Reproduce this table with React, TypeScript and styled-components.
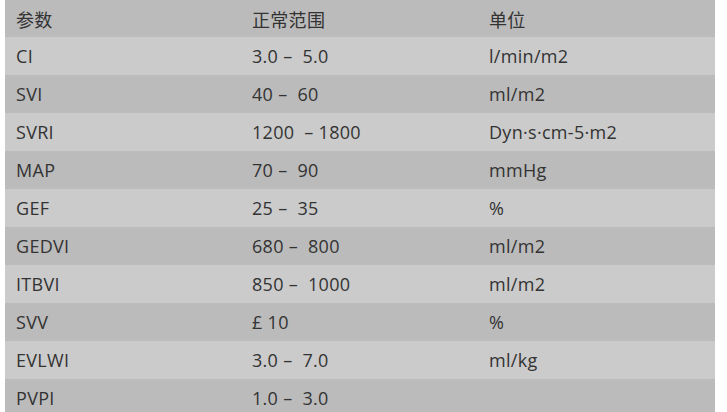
import React from "react";
import styled, { createGlobalStyle } from "styled-components";

const Global = createGlobalStyle`
  html, body { margin: 0; padding: 0; background: #ffffff; }
  body { font-family: "Open Sans", "Noto Sans CJK SC", sans-serif; }
`;

const Page = styled.div`
  padding: 0 12px 0 5px;
`;

const Table = styled.div`
  width: 710px;
  display: flex;
  flex-direction: column;
`;

const Row = styled.div<{ $shade: "dark" | "light"; $h: number }>`
  display: grid;
  grid-template-columns: 236px 237px 237px;
  height: ${(p) => p.$h}px;
  align-items: center;
  background: ${(p) => (p.$shade === "dark" ? "#bbbbbb" : "#cbcbcb")};
`;

const Cell = styled.div`
  padding-left: 11px;
  font-family: "Open Sans", "Noto Sans CJK SC", sans-serif;
  font-size: 18px;
  letter-spacing: 0.3px;
  color: #333;
  white-space: pre;
`;

const rows: [string, string, string][] = [
  ["CI", "3.0 –  5.0", "l/min/m2"],
  ["SVI", "40 –  60", "ml/m2"],
  ["SVRI", "1200  – 1800", "Dyn·s·cm-5·m2"],
  ["MAP", "70 –  90", "mmHg"],
  ["GEF", "25 –  35", "%"],
  ["GEDVI", "680 –  800", "ml/m2"],
  ["ITBVI", "850 –  1000", "ml/m2"],
  ["SVV", "£ 10", "%"],
  ["EVLWI", "3.0 –  7.0", "ml/kg"],
  ["PVPI", "1.0 –  3.0", ""],
];

export default function App() {
  return (
    <Page>
      <Global />
      <Table>
        <Row $shade="dark" $h={37}>
          <Cell>参数</Cell>
          <Cell>正常范围</Cell>
          <Cell>单位</Cell>
        </Row>
        {rows.map((r, i) => (
          <Row key={r[0]} $shade={i % 2 === 0 ? "light" : "dark"} $h={38}>
            <Cell>{r[0]}</Cell>
            <Cell>{r[1]}</Cell>
            <Cell>{r[2]}</Cell>
          </Row>
        ))}
      </Table>
    </Page>
  );
}
